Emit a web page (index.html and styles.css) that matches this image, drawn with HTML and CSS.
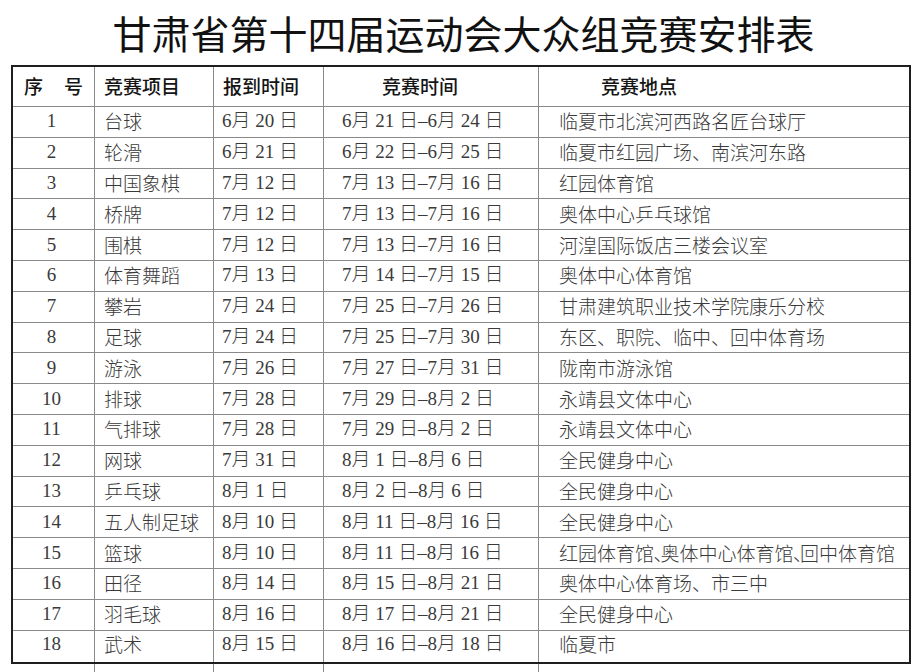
FILE: index.html
```html
<!DOCTYPE html>
<html lang="zh-CN">
<head>
<meta charset="utf-8">
<title>甘肃省第十四届运动会大众组竞赛安排表</title>
<link rel="stylesheet" href="styles.css">
</head>
<body>
<h1 class="title">甘肃省第十四届运动会大众组竞赛安排表</h1>
<table class="sched">
  <colgroup>
    <col class="c1"><col class="c2"><col class="c3"><col class="c4"><col class="c5">
  </colgroup>
  <thead>
    <tr class="head">
      <th class="h-no"><div class="pair"><span>序</span><span>号</span></div></th>
      <th class="h-item">竞赛项目</th>
      <th class="h-reg">报到时间</th>
      <th class="h-time">竞赛时间</th>
      <th class="h-place">竞赛地点</th>
    </tr>
  </thead>
  <tbody>
    <tr><td class="no">1</td><td class="item">台球</td><td class="reg">6月 20 日</td><td class="time">6月 21 日–6月 24 日</td><td class="place">临夏市北滨河西路名匠台球厅</td></tr>
    <tr><td class="no">2</td><td class="item">轮滑</td><td class="reg">6月 21 日</td><td class="time">6月 22 日–6月 25 日</td><td class="place">临夏市红园广场、南滨河东路</td></tr>
    <tr><td class="no">3</td><td class="item">中国象棋</td><td class="reg">7月 12 日</td><td class="time">7月 13 日–7月 16 日</td><td class="place">红园体育馆</td></tr>
    <tr><td class="no">4</td><td class="item">桥牌</td><td class="reg">7月 12 日</td><td class="time">7月 13 日–7月 16 日</td><td class="place">奥体中心乒乓球馆</td></tr>
    <tr><td class="no">5</td><td class="item">围棋</td><td class="reg">7月 12 日</td><td class="time">7月 13 日–7月 16 日</td><td class="place">河湟国际饭店三楼会议室</td></tr>
    <tr><td class="no">6</td><td class="item">体育舞蹈</td><td class="reg">7月 13 日</td><td class="time">7月 14 日–7月 15 日</td><td class="place">奥体中心体育馆</td></tr>
    <tr><td class="no">7</td><td class="item">攀岩</td><td class="reg">7月 24 日</td><td class="time">7月 25 日–7月 26 日</td><td class="place">甘肃建筑职业技术学院康乐分校</td></tr>
    <tr><td class="no">8</td><td class="item">足球</td><td class="reg">7月 24 日</td><td class="time">7月 25 日–7月 30 日</td><td class="place">东区、职院、临中、回中体育场</td></tr>
    <tr><td class="no">9</td><td class="item">游泳</td><td class="reg">7月 26 日</td><td class="time">7月 27 日–7月 31 日</td><td class="place">陇南市游泳馆</td></tr>
    <tr><td class="no">10</td><td class="item">排球</td><td class="reg">7月 28 日</td><td class="time">7月 29 日–8月 2 日</td><td class="place">永靖县文体中心</td></tr>
    <tr><td class="no">11</td><td class="item">气排球</td><td class="reg">7月 28 日</td><td class="time">7月 29 日–8月 2 日</td><td class="place">永靖县文体中心</td></tr>
    <tr><td class="no">12</td><td class="item">网球</td><td class="reg">7月 31 日</td><td class="time">8月 1 日–8月 6 日</td><td class="place">全民健身中心</td></tr>
    <tr><td class="no">13</td><td class="item">乒乓球</td><td class="reg">8月 1 日</td><td class="time">8月 2 日–8月 6 日</td><td class="place">全民健身中心</td></tr>
    <tr><td class="no">14</td><td class="item">五人制足球</td><td class="reg">8月 10 日</td><td class="time">8月 11 日–8月 16 日</td><td class="place">全民健身中心</td></tr>
    <tr><td class="no">15</td><td class="item">篮球</td><td class="reg">8月 10 日</td><td class="time">8月 11 日–8月 16 日</td><td class="place">红园体育馆<span class="pc">､</span>奥体中心体育馆<span class="pc">､</span>回中体育馆</td></tr>
    <tr><td class="no">16</td><td class="item">田径</td><td class="reg">8月 14 日</td><td class="time">8月 15 日–8月 21 日</td><td class="place">奥体中心体育场、市三中</td></tr>
    <tr><td class="no">17</td><td class="item">羽毛球</td><td class="reg">8月 16 日</td><td class="time">8月 17 日–8月 21 日</td><td class="place">全民健身中心</td></tr>
    <tr class="last"><td class="no">18</td><td class="item">武术</td><td class="reg">8月 15 日</td><td class="time">8月 16 日–8月 18 日</td><td class="place">临夏市</td></tr>
  </tbody>
</table>
<div class="tail"><span></span><span></span><span></span><span></span></div>
</body>
</html>
```

FILE: styles.css
```css
html, body {
  margin: 0;
  padding: 0;
  background: #ffffff;
}

body {
  width: 919px;
  height: 672px;
  overflow: hidden;
  font-family: "Liberation Serif", "Noto Sans CJK SC", serif;
  color: #3a3a3a;
}

.title {
  margin: 0;
  height: 65px;
  display: flex;
  align-items: center;
  justify-content: center;
  padding-left: 8px;
  box-sizing: border-box;
  font-family: "Noto Sans CJK SC", sans-serif;
  font-weight: 400;
  font-size: 39px;
  line-height: 1;
  color: #111111;
}

.sched {
  margin-left: 11px;
  width: 900px;
  table-layout: fixed;
  border-collapse: separate;
  border-spacing: 0;
  border: 2px solid #1e1e1e;
  font-size: 19px;
}

.c1 { width: 82px; }
.c2 { width: 119px; }
.c3 { width: 110px; }
.c4 { width: 215px; }
.c5 { width: 370px; }

.sched th,
.sched td {
  box-sizing: border-box;
  padding: 0 0 2px 0;
  border-right: 1px solid #8a8a8a;
  border-bottom: 1px solid #8a8a8a;
  text-align: left;
  vertical-align: middle;
  white-space: nowrap;
  line-height: 1;
}

.sched th:last-child,
.sched td:last-child {
  border-right: none;
}

.sched tr {
  height: 30.8px;
}

.sched tr.last {
  height: 31px;
}

.sched tr.last td {
  border-bottom: none;
  padding-bottom: 6px;
}

.sched tr.head {
  height: 40px;
}

.sched th {
  font-family: "Noto Sans CJK SC", sans-serif;
  font-weight: 500;
  color: #151515;
}

.pair {
  display: flex;
  justify-content: space-between;
  padding: 0 11px;
}

.sched th.h-no { padding-left: 0; padding-right: 0; }
.sched th.h-item { padding-left: 9px; }
.sched th.h-reg { padding-left: 9px; }
.sched th.h-time { padding-left: 58px; }
.sched th.h-place { padding-left: 62px; }

.sched td {
  font-weight: 300;
}

.sched td.no {
  text-align: center;
  padding-right: 4px;
}

.sched td.item {
  font-family: "Noto Sans CJK SC", sans-serif;
  padding-left: 9px;
}

.sched td.reg { padding-left: 8px; }
.sched td.time { padding-left: 18px; }

.sched td.place {
  font-family: "Noto Sans CJK SC", sans-serif;
  padding-left: 20px;
}

.pc {
  letter-spacing: -3px;
}

.tail {
  margin-left: 13px;
  height: 9px;
  display: grid;
  grid-template-columns: 82px 119px 110px 215px;
}

.tail span {
  border-right: 1px solid #8a8a8a;
}
```
